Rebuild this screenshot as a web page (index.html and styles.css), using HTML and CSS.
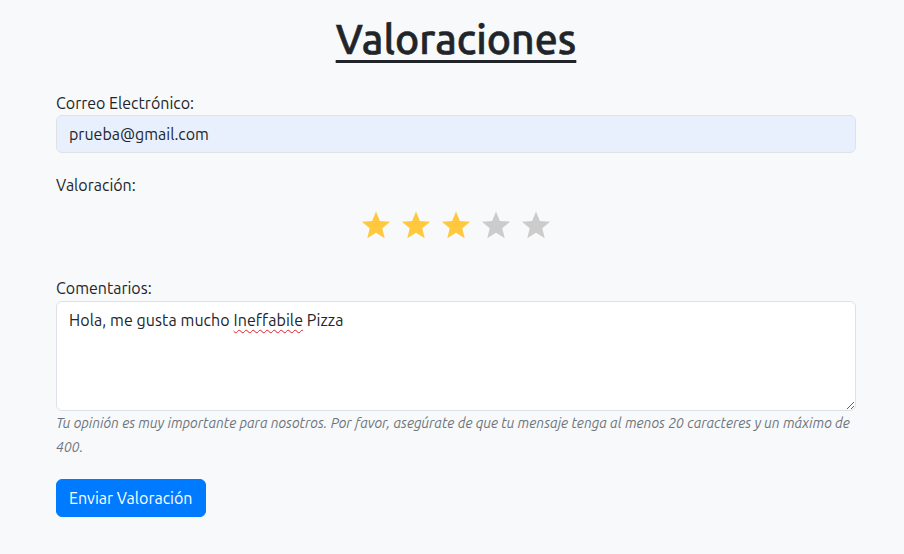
FILE: index.html
```html
<!DOCTYPE html>
<html lang="es">
<head>
<meta charset="utf-8">
<title>Valoraciones</title>
<link rel="stylesheet" href="styles.css">
</head>
<body>
<main class="container">
  <h1 class="title">Valoraciones</h1>
  <form class="form">
    <div class="group">
      <label class="label" for="email">Correo Electrónico:</label>
      <input class="control control-autofill" id="email" type="email" value="prueba@gmail.com">
    </div>
    <div class="group">
      <span class="label">Valoración:</span>
      <div class="stars">
        <svg class="star on" viewBox="0 0 24 24"><path d="M12 1.5l3.1 7.6 8.2.6-6.3 5.3 2 8-7-4.4-7 4.4 2-8L.7 9.7l8.2-.6z"/></svg>
        <svg class="star on" viewBox="0 0 24 24"><path d="M12 1.5l3.1 7.6 8.2.6-6.3 5.3 2 8-7-4.4-7 4.4 2-8L.7 9.7l8.2-.6z"/></svg>
        <svg class="star on" viewBox="0 0 24 24"><path d="M12 1.5l3.1 7.6 8.2.6-6.3 5.3 2 8-7-4.4-7 4.4 2-8L.7 9.7l8.2-.6z"/></svg>
        <svg class="star" viewBox="0 0 24 24"><path d="M12 1.5l3.1 7.6 8.2.6-6.3 5.3 2 8-7-4.4-7 4.4 2-8L.7 9.7l8.2-.6z"/></svg>
        <svg class="star" viewBox="0 0 24 24"><path d="M12 1.5l3.1 7.6 8.2.6-6.3 5.3 2 8-7-4.4-7 4.4 2-8L.7 9.7l8.2-.6z"/></svg>
      </div>
    </div>
    <div class="group group-comments">
      <span class="label">Comentarios:</span>
      <div class="control textarea" role="textbox" aria-multiline="true">Hola, me gusta mucho <span class="misspelled">Ineffabile</span> Pizza</div>
      <p class="help">Tu opinión es muy importante para nosotros. Por favor, asegúrate de que tu mensaje tenga al menos 20 caracteres y un máximo de 400.</p>
    </div>
    <button class="btn" type="button">Enviar Valoración</button>
  </form>
</main>
</body>
</html>
```
FILE: styles.css
```css
* { box-sizing: border-box; }
html, body { margin: 0; }
body {
  background: #f8f9fa;
  color: #212529;
  font-family: "Ubuntu", "Noto Sans", "Liberation Sans", sans-serif;
  font-size: 16px;
  line-height: 24px;
}
.container {
  width: 800px;
  margin-left: 56px;
  padding-top: 15px;
}
.title {
  margin: 0 0 28px;
  font-size: 41px;
  line-height: 48px;
  font-weight: 500;
  text-align: center;
  text-decoration: underline;
  text-decoration-thickness: 3px;
  text-underline-offset: 6px;
  -webkit-text-stroke: 0.6px #212529;
}
.form { display: flex; flex-direction: column; }
.group { display: flex; flex-direction: column; margin-bottom: 20px; }
.label { display: block; }
.control {
  display: block;
  width: 100%;
  font: inherit;
  color: #212529;
  padding: 6px 12px;
  border: 1px solid #dee2e6;
  border-radius: 6px;
  background: #fff;
  line-height: 24px;
}
.control-autofill { background: #e8f0fe; height: 38px; }
.stars {
  display: flex;
  justify-content: center;
  gap: 10px;
  padding: 12px 0 11px;
}
.star { width: 30px; height: 31px; fill: #ccc; }
.star.on { fill: #ffc83d; }
.group-comments { margin-top: 5px; }
.textarea {
  height: 110px;
  resize: vertical;
  overflow: auto;
  margin-top: 1px;
  letter-spacing: 0.08px;
}
.misspelled {
  text-decoration: underline wavy #e0202a;
  text-decoration-thickness: 1px;
  text-underline-offset: 3px;
}
.help {
  margin: 0;
  font-size: 14px;
  line-height: 24px;
  font-style: italic;
  color: #6c757d;
}
.btn {
  align-self: flex-start;
  margin-top: 0;
  font: inherit;
  color: #fff;
  background: #007bff;
  border: 1px solid #007bff;
  border-radius: 6px;
  padding: 6px 12px;
  line-height: 24px;
}
```
